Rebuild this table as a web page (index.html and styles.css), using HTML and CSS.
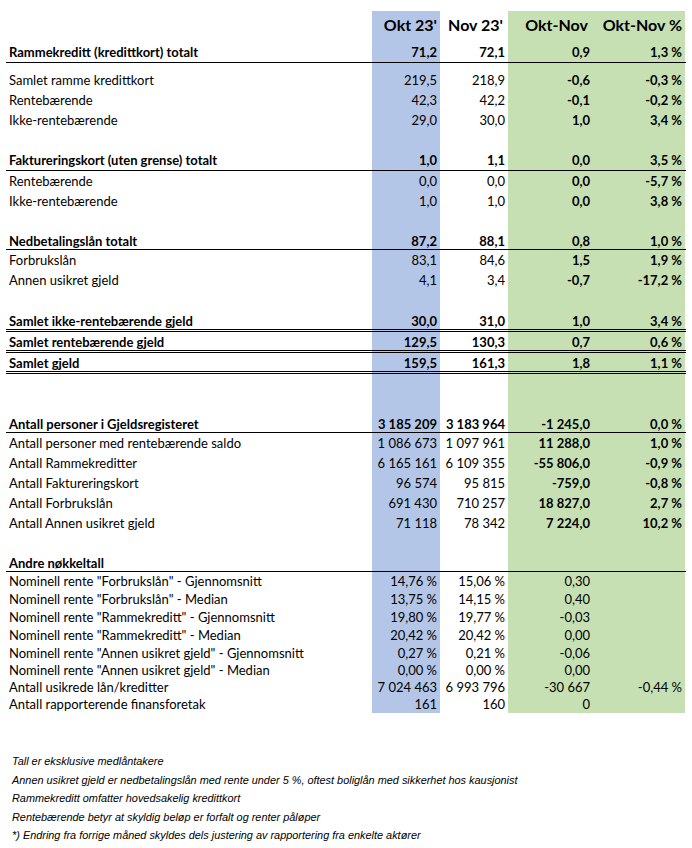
FILE: index.html
```html
<!DOCTYPE html>
<html lang="no">
<head>
<meta charset="utf-8">
<title>Gjeldsregisteret</title>
<link rel="stylesheet" href="styles.css">
</head>
<body>
<div class="sheet">
  <div class="row hdr"><span></span><span class="h1">Okt 23'</span><span class="h2">Nov 23'</span><span class="h3">Okt-Nov</span><span class="h4">Okt-Nov %</span></div>

  <div class="row sec"><span>Rammekreditt (kredittkort) totalt</span><span>71,2</span><span>72,1</span><span>0,9</span><span>1,3 %</span></div>
  <div class="gap"></div>
  <div class="row chg"><span>Samlet ramme kredittkort</span><span>219,5</span><span>218,9</span><span>-0,6</span><span>-0,3 %</span></div>
  <div class="row chg"><span>Rentebærende</span><span>42,3</span><span>42,2</span><span>-0,1</span><span>-0,2 %</span></div>
  <div class="row chg"><span>Ikke-rentebærende</span><span>29,0</span><span>30,0</span><span>1,0</span><span>3,4 %</span></div>
  <div class="blank"></div>

  <div class="row sec"><span>Faktureringskort (uten grense) totalt</span><span>1,0</span><span>1,1</span><span>0,0</span><span>3,5 %</span></div>
  <div class="row chg"><span>Rentebærende</span><span>0,0</span><span>0,0</span><span>0,0</span><span>-5,7 %</span></div>
  <div class="row chg"><span>Ikke-rentebærende</span><span>1,0</span><span>1,0</span><span>0,0</span><span>3,8 %</span></div>
  <div class="blank b19"></div>

  <div class="row sec lo"><span>Nedbetalingslån totalt</span><span>87,2</span><span>88,1</span><span>0,8</span><span>1,0 %</span></div>
  <div class="row chg"><span>Forbrukslån</span><span>83,1</span><span>84,6</span><span>1,5</span><span>1,9 %</span></div>
  <div class="row chg"><span>Annen usikret gjeld</span><span>4,1</span><span>3,4</span><span>-0,7</span><span>-17,2 %</span></div>
  <div class="blank"></div>

  <div class="row dbl first"><span>Samlet ikke-rentebærende gjeld</span><span>30,0</span><span>31,0</span><span>1,0</span><span>3,4 %</span></div>
  <div class="row dbl"><span>Samlet rentebærende gjeld</span><span>129,5</span><span>130,3</span><span>0,7</span><span>0,6 %</span></div>
  <div class="row dbl"><span>Samlet gjeld</span><span>159,5</span><span>161,3</span><span>1,8</span><span>1,1 %</span></div>
  <div class="blank b39"></div>

  <div class="row sec lo"><span>Antall personer i Gjeldsregisteret</span><span>3 185 209</span><span>3 183 964</span><span>-1 245,0</span><span>0,0 %</span></div>
  <div class="row chg"><span>Antall personer med rentebærende saldo</span><span>1 086 673</span><span>1 097 961</span><span>11 288,0</span><span>1,0 %</span></div>
  <div class="row chg"><span>Antall Rammekreditter</span><span>6 165 161</span><span>6 109 355</span><span>-55 806,0</span><span>-0,9 %</span></div>
  <div class="row chg"><span>Antall Faktureringskort</span><span>96 574</span><span>95 815</span><span>-759,0</span><span>-0,8 %</span></div>
  <div class="row chg"><span>Antall Forbrukslån</span><span>691 430</span><span>710 257</span><span>18 827,0</span><span>2,7 %</span></div>
  <div class="row chg"><span>Antall Annen usikret gjeld</span><span>71 118</span><span>78 342</span><span>7 224,0</span><span>10,2 %</span></div>
  <div class="blank"></div>

  <div class="row sec lbl"><span>Andre nøkkeltall</span><span></span><span></span><span></span><span></span></div>
  <div class="row s18"><span>Nominell rente "Forbrukslån" - Gjennomsnitt</span><span>14,76 %</span><span>15,06 %</span><span>0,30</span><span></span></div>
  <div class="row s18"><span>Nominell rente "Forbrukslån" - Median</span><span>13,75 %</span><span>14,15 %</span><span>0,40</span><span></span></div>
  <div class="row s18"><span>Nominell rente "Rammekreditt" - Gjennomsnitt</span><span>19,80 %</span><span>19,77 %</span><span>-0,03</span><span></span></div>
  <div class="row s18"><span>Nominell rente "Rammekreditt" - Median</span><span>20,42 %</span><span>20,42 %</span><span>0,00</span><span></span></div>
  <div class="row s18"><span>Nominell rente "Annen usikret gjeld" - Gjennomsnitt</span><span>0,27 %</span><span>0,21 %</span><span>-0,06</span><span></span></div>
  <div class="row s17"><span>Nominell rente "Annen usikret gjeld" - Median</span><span>0,00 %</span><span>0,00 %</span><span>0,00</span><span></span></div>
  <div class="row s17"><span>Antall usikrede lån/kreditter</span><span>7 024 463</span><span>6 993 796</span><span>-30 667</span><span>-0,44 %</span></div>
  <div class="row s17"><span>Antall rapporterende finansforetak</span><span>161</span><span>160</span><span>0</span><span></span></div>
</div>

<div class="notes">
  <p>Tall er eksklusive medlåntakere</p>
  <p>Annen usikret gjeld er nedbetalingslån med rente under 5 %, oftest boliglån med sikkerhet hos kausjonist</p>
  <p>Rammekreditt omfatter hovedsakelig kredittkort</p>
  <p>Rentebærende betyr at skyldig beløp er forfalt og renter påløper</p>
  <p>*) Endring fra forrige måned skyldes dels justering av rapportering fra enkelte aktører</p>
</div>
</body>
</html>
```
FILE: styles.css
```css
html, body {
  margin: 0;
  padding: 0;
  background: #ffffff;
}

body {
  font-family: Lato, "Open Sans", "Liberation Sans", sans-serif;
  font-size: 13px;
  color: #000000;
}

.sheet {
  margin: 11px 0 0 6px;
  width: 680px;
  background: linear-gradient(to right,
    transparent 0 366px,
    #b4c6e7 366px 434px,
    transparent 434px 502px,
    #c6e0b4 502px 679px,
    transparent 679px);
}

.row {
  display: grid;
  grid-template-columns: 366px 68px 68px 85px 93px;
  box-sizing: border-box;
  height: 20px;
  line-height: 20px;
  white-space: nowrap;
}

.row > span {
  text-align: right;
  padding-right: 3px;
  overflow: visible;
}

.row > span:first-child {
  text-align: left;
  padding-left: 3px;
  padding-right: 0;
}

.row > span:nth-child(5) {
  padding-right: 4px;
}

.hdr {
  height: 31px;
  line-height: 28px;
  font-size: 16px;
  font-weight: 700;
}

.hdr .h1 { padding-right: 3px; }
.hdr .h2 { padding-right: 5px; }
.hdr .h3 { padding-right: 5px; }
.hdr .h4 { padding-right: 8px; }

.sec {
  height: 21px;
  border-bottom: 1px solid #000;
  font-weight: 700;
}

.sec.lo {
  height: 20px;
  padding-top: 3px;
  line-height: 16px;
}

.sec.lbl {
  height: 19px;
  padding-top: 2px;
  line-height: 16px;
}

.chg > span:nth-child(4),
.chg > span:nth-child(5) {
  font-weight: 700;
}

.dbl {
  height: 21px;
  padding-top: 2px;
  line-height: 16px;
  border-bottom: 3px double #000;
  font-weight: 700;
}

.dbl.first {
  height: 22px;
  padding-top: 3px;
  line-height: 17px;
}

.gap { height: 7px; }
.blank { height: 20px; }
.blank.b19 { height: 19px; }
.blank.b39 { height: 39px; }

.s18 {
  height: 18px;
  line-height: 18px;
}

.s17 {
  height: 17px;
  line-height: 17px;
}

.notes {
  margin-top: 39px;
  padding-left: 12px;
  font-family: "Liberation Sans", Arial, sans-serif;
  font-style: italic;
  font-size: 10.9px;
  line-height: 18.5px;
  color: #000;
}

.notes p {
  margin: 0;
}
```
